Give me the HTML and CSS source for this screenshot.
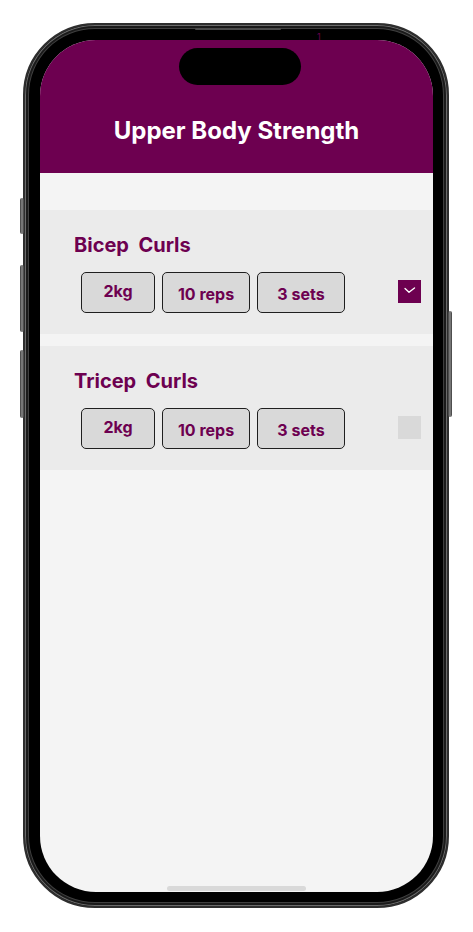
FILE: index.html
```html
<!DOCTYPE html>
<html lang="en">
<head>
<meta charset="utf-8">
<title>Upper Body Strength</title>
<link rel="stylesheet" href="styles.css">
</head>
<body>
<div class="page">
  <div class="phone">
    <span class="btn btn-action"></span>
    <span class="btn btn-vol-up"></span>
    <span class="btn btn-vol-down"></span>
    <span class="btn btn-power"></span>
    <span class="speaker"></span>
    <span class="stray">1</span>
    <div class="screen">
      <div class="island"></div>
      <header class="header">
        <h1 class="title">Upper Body Strength</h1>
      </header>
      <main class="content">
        <section class="card">
          <h2 class="card-title">Bicep&nbsp; Curls</h2>
          <div class="row">
            <div class="chip chip-kg">2kg</div>
            <div class="chip">10 reps</div>
            <div class="chip">3 sets</div>
            <div class="check checked">
              <svg width="23" height="23" viewBox="0 0 23 23"><path d="M7 8.6 L11 12.2 L16.5 8" fill="none" stroke="#fff" stroke-width="1.4" stroke-linecap="round" stroke-linejoin="round"/></svg>
            </div>
          </div>
        </section>
        <section class="card">
          <h2 class="card-title">Tricep&nbsp; Curls</h2>
          <div class="row">
            <div class="chip chip-kg">2kg</div>
            <div class="chip">10 reps</div>
            <div class="chip">3 sets</div>
            <div class="check"></div>
          </div>
        </section>
      </main>
      <div class="home-bar"></div>
    </div>
  </div>
</div>
</body>
</html>
```

FILE: styles.css
```css
* { box-sizing: border-box; }
html, body { margin: 0; padding: 0; background: #fff; }
body { font-family: Inter, "Noto Sans", sans-serif; }

.page {
  width: 473px;
  height: 932px;
  padding: 23px 0 0 23px;
}

.phone {
  position: relative;
  width: 426px;
  height: 885px;
  padding: 15px 14px 14px 15px;
  background: #000;
  border: 2px solid #2e2e2e;
  border-radius: 72px;
  box-shadow: inset 0 0 0 1px #6b6b6b, inset 0 0 0 3px #1a1a1a, inset 0 0 0 4px #3f3f3f;
}

.btn {
  position: absolute;
  width: 4px;
  background: linear-gradient(90deg, #3a3a3a, #8a8a8a 50%, #3a3a3a);
  border-radius: 2px;
}
.btn-action { left: -5px; top: 173px; height: 36px; }
.btn-vol-up { left: -5px; top: 240px; height: 67px; }
.btn-vol-down { left: -5px; top: 325px; height: 68px; }
.btn-power { right: -5px; top: 286px; height: 106px; }

.speaker {
  position: absolute;
  left: 170px;
  top: 3px;
  width: 86px;
  height: 2px;
  background: #4a4a4a;
  border-radius: 1px;
}

.stray {
  position: absolute;
  left: 292px;
  top: 7px;
  font-size: 9px;
  line-height: 10px;
  color: #6d0050;
}

.screen {
  position: relative;
  width: 393px;
  height: 852px;
  border-radius: 56px;
  overflow: hidden;
  background: #f4f4f4;
  display: flex;
  flex-direction: column;
}

.island {
  position: absolute;
  left: 139px;
  top: 8px;
  width: 122px;
  height: 37px;
  background: #000;
  border-radius: 19px;
}

.header {
  background: #6d0050;
  height: 133px;
  padding-top: 77px;
}
.title {
  margin: 0;
  text-align: center;
  color: #fff;
  font-size: 24px;
  line-height: 28px;
  font-weight: 700;
}

.content {
  flex: 1;
  padding-top: 37px;
  display: flex;
  flex-direction: column;
  gap: 12px;
}

.card {
  background: #ebebeb;
  height: 124px;
  padding: 23px 12px 0 34px;
}
.card-title {
  margin: 0;
  color: #6d0050;
  font-size: 20px;
  line-height: 24px;
  font-weight: 700;
}

.row {
  display: flex;
  align-items: center;
  gap: 7px;
  margin-top: 15px;
  padding-left: 7px;
}

.chip {
  width: 88px;
  height: 41px;
  display: flex;
  align-items: center;
  justify-content: center;
  background: #d9d9d9;
  border: 1px solid #1f1f1f;
  border-radius: 5px;
  color: #6d0050;
  font-size: 16px;
  font-weight: 700;
  padding-top: 2px;
}
.chip-kg {
  width: 74px;
  padding-top: 0;
  padding-bottom: 3px;
}

.check {
  margin-left: auto;
  width: 23px;
  height: 23px;
  background: #d9d9d9;
  margin-top: -2px;
}
.check svg { display: block; }
.check.checked { background: #6d0050; }

.home-bar {
  position: absolute;
  left: 127px;
  bottom: 1px;
  width: 139px;
  height: 5px;
  border-radius: 3px;
  background: #d9d9d9;
}
```
